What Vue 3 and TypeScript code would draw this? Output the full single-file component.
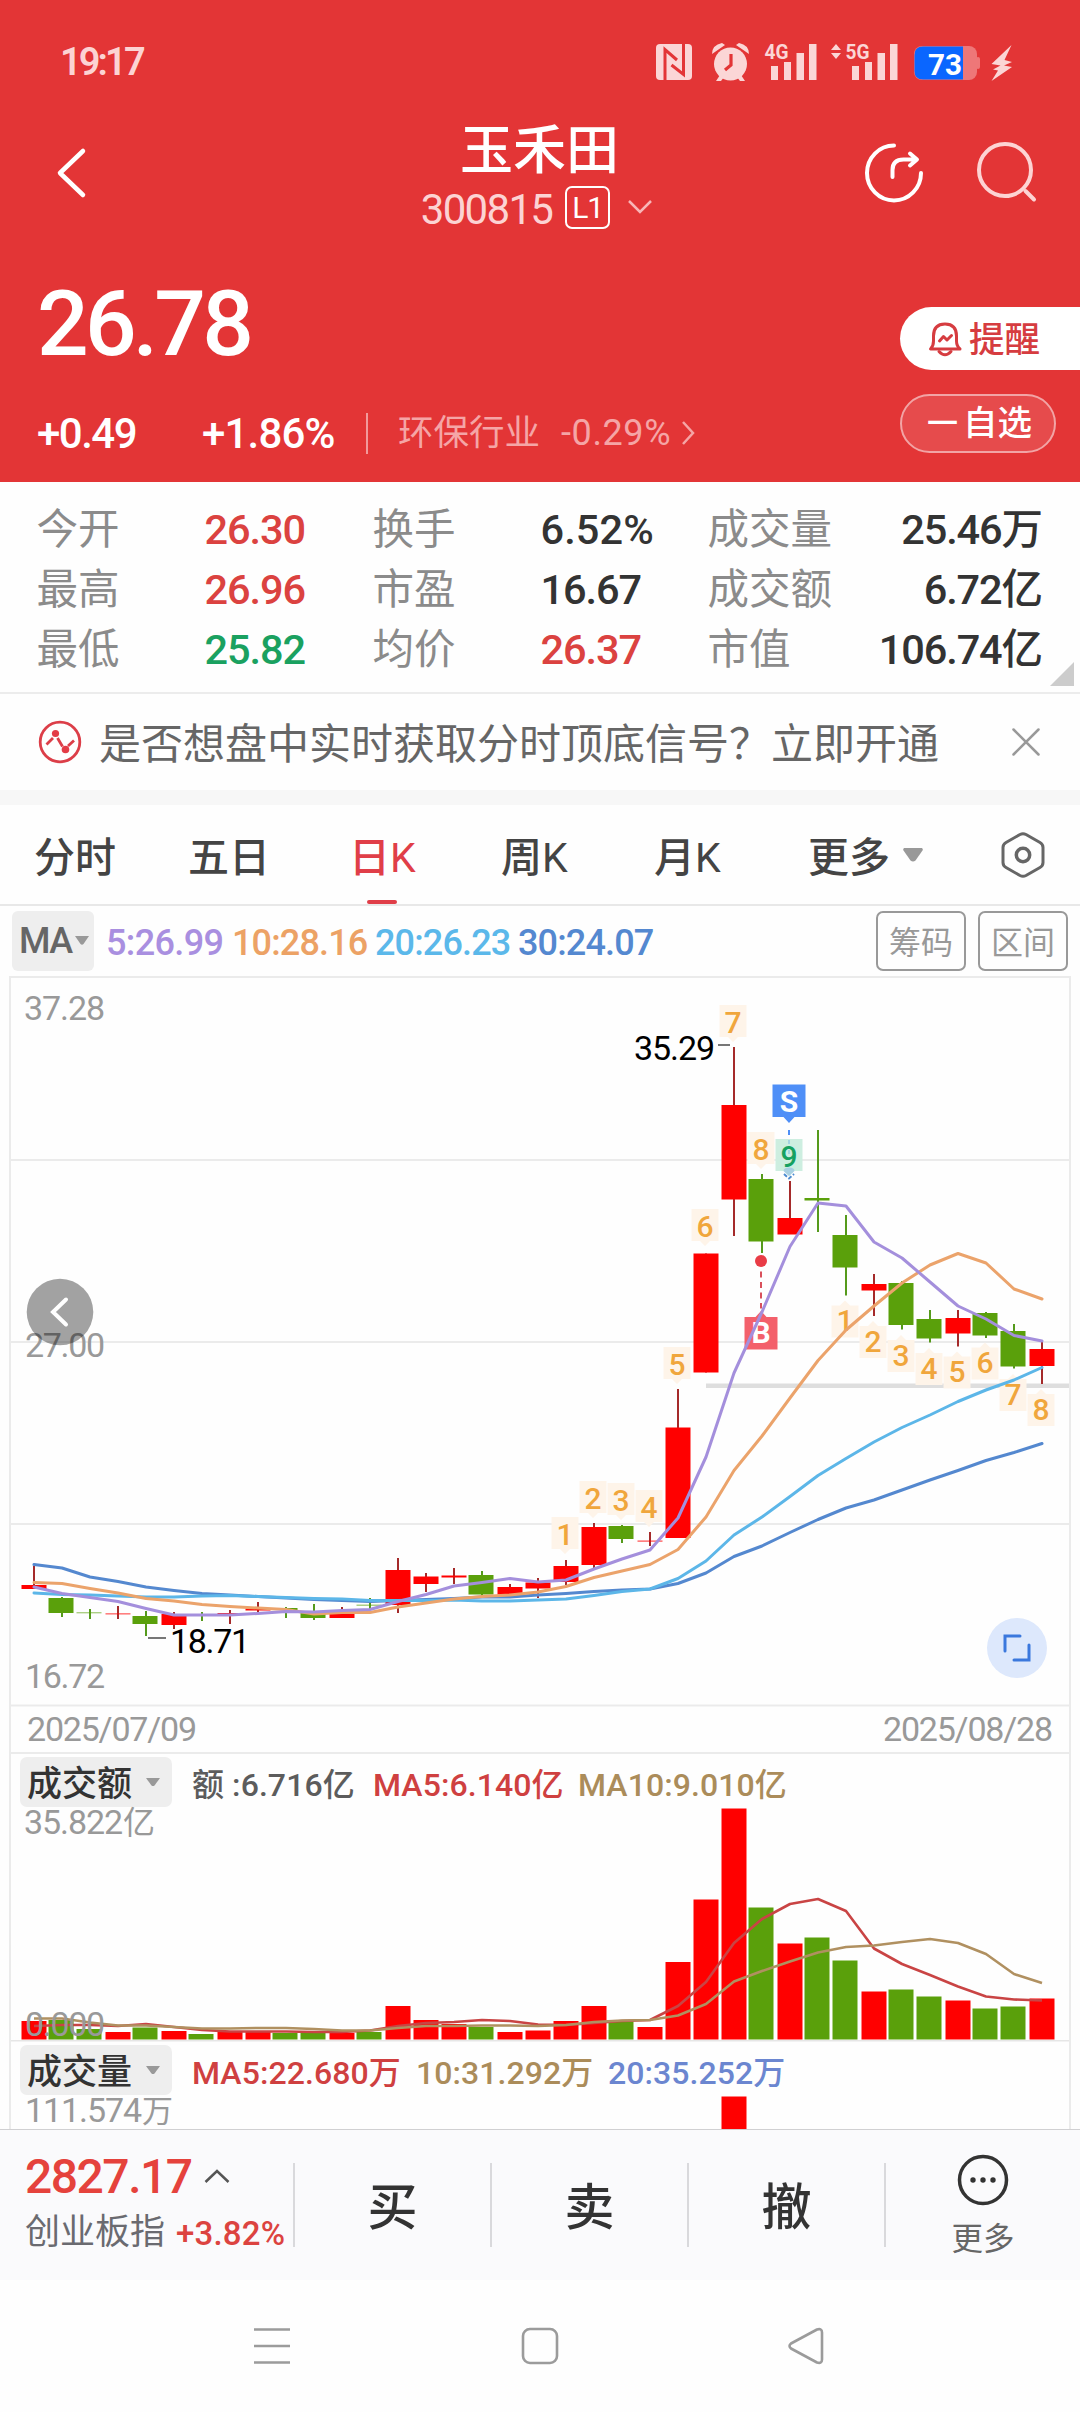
<script setup lang="ts">
interface Candle { up: boolean; top: number; bottom: number; high: number; low: number }
interface Badge { text: string; x: number; y: number; below?: boolean; green?: boolean }

const cx = (i: number): number => 34 + 28 * i

// [direction, body top, body bottom, high, low]
const rawCandles: [number, number, number, number, number][] = [
  [1, 1585, 1589, 1566, 1587], [0, 1598, 1613, 1597, 1617], [0, 1612, 1613.4, 1609, 1619],
  [1, 1613, 1614.6, 1606, 1619], [0, 1616, 1624, 1611, 1636], [1, 1614, 1625, 1612, 1629],
  [0, 1614, 1615.6, 1612, 1621], [1, 1613, 1615, 1610, 1624], [1, 1608.5, 1610.5, 1602, 1613],
  [0, 1608, 1610, 1607, 1618], [0, 1613, 1618, 1604, 1620], [1, 1613.5, 1618, 1607, 1618],
  [0, 1604.5, 1606, 1598, 1609], [1, 1570, 1605, 1558, 1613], [1, 1576.5, 1584, 1573, 1592],
  [1, 1575.5, 1577.5, 1568, 1584], [0, 1575, 1594.5, 1571, 1597], [1, 1587, 1594.5, 1584, 1596],
  [1, 1582.5, 1588.5, 1578, 1598], [1, 1566, 1582, 1560, 1585], [1, 1527, 1565, 1523, 1569],
  [0, 1526, 1539, 1525, 1543], [1, 1540.3, 1542, 1532, 1546], [1, 1427.5, 1538, 1389, 1538],
  [1, 1253.5, 1372.5, 1253.5, 1372.5], [1, 1105, 1199.5, 1047, 1236], [0, 1179, 1241.5, 1174, 1253],
  [1, 1218, 1234.5, 1181, 1234], [0, 1198, 1200.5, 1130, 1232], [0, 1235, 1267.5, 1215, 1295.5],
  [1, 1284, 1290.5, 1274, 1316], [0, 1283, 1325, 1281, 1329.5], [0, 1319, 1338.5, 1310, 1342.5],
  [1, 1318, 1333.5, 1310, 1346.5], [0, 1313, 1335.5, 1312, 1338], [0, 1331, 1366.5, 1324, 1368.5],
  [1, 1349, 1366, 1342, 1384],
]
const candles: Candle[] = rawCandles.map(([d, top, bottom, high, low]) => ({ up: d === 1, top, bottom, high, low }))

const line = (ys: number[]): string => ys.map((y, i) => `${cx(i)},${y}`).join(' ')

const averages: { color: string; points: string }[] = [
  { color: '#5488cf', points: line([1564.5, 1568, 1577, 1581.5, 1587, 1590.5, 1593.5, 1595, 1596.5, 1598, 1599.5, 1600.5, 1601.5, 1600.5, 1599.5, 1598.5, 1597, 1597, 1595, 1593.5, 1591.5, 1590, 1589, 1583.5, 1573, 1556.5, 1546, 1532.5, 1519.5, 1508, 1500, 1490, 1480, 1470.5, 1460.5, 1452.5, 1443.5]) },
  { color: '#5cb6e8', points: line([1593, 1594.5, 1595, 1596, 1597, 1597, 1596, 1595.5, 1596.5, 1597.5, 1598.5, 1599, 1600.5, 1600.5, 1600.5, 1600, 1601, 1601, 1600, 1599, 1595.5, 1591.5, 1589, 1578.5, 1561, 1535, 1517, 1496.5, 1475.5, 1458.5, 1442, 1427.5, 1415, 1401.5, 1390, 1380, 1367.5]) },
  { color: '#eba36b', points: line([1582.5, 1583.5, 1588.5, 1593, 1598.5, 1601, 1604.5, 1606.5, 1608, 1609.5, 1614, 1612.5, 1612.5, 1607, 1603, 1599, 1596.5, 1595, 1592, 1586.5, 1577.5, 1571, 1564.5, 1549.5, 1517, 1470.5, 1436, 1398, 1360.5, 1330, 1306, 1283, 1265, 1253.5, 1263, 1289, 1299]) },
  { color: '#a48fdc', points: line([1587, 1593.5, 1597.5, 1601.5, 1608.5, 1615, 1615, 1615, 1613.5, 1611.5, 1612, 1610.5, 1609.5, 1601.5, 1594.5, 1586, 1582.5, 1578.5, 1582, 1580, 1569, 1559, 1550, 1518, 1457, 1373, 1312, 1246.5, 1203, 1206, 1242, 1258, 1282, 1306, 1319, 1335.5, 1341]) },
]

const amountTops: number[] = [2021, 2020, 2029, 2032, 2027.5, 2031, 2034, 2032, 2032, 2033, 2033, 2033, 2032, 2006, 2020, 2024, 2027, 2032, 2030.5, 2021, 2006, 2021, 2027, 1962, 1899.5, 1808.5, 1907.5, 1943.5, 1937.5, 1960.5, 1991.5, 1989.5, 1996.5, 2000.5, 2008.5, 2006.5, 1998.5]
const amountMa5 = line([2026, 2025, 2025, 2026, 2024, 2027, 2030, 2031.5, 2031.5, 2031.5, 2032, 2032, 2030.5, 2026, 2023, 2022, 2020, 2021, 2024.5, 2025, 2023, 2021, 2020, 2006, 1982, 1943, 1919, 1904, 1899, 1911, 1948.5, 1964, 1975, 1986.5, 1996.5, 1999.5, 2000.5])
const amountMa10 = line([2018.5, 2018.5, 2022.5, 2025.5, 2025.5, 2027, 2028.5, 2028.5, 2028, 2028, 2029, 2030.5, 2030.5, 2028, 2026, 2026, 2025.5, 2025.5, 2026, 2025, 2022, 2020.5, 2020, 2015.5, 2004, 1981.5, 1971, 1961.5, 1952.5, 1947, 1945.5, 1942, 1939, 1943, 1954, 1974, 1983])

const badges: Badge[] = [
  { text: '1', x: 565, y: 1517 }, { text: '2', x: 593, y: 1481 }, { text: '3', x: 621, y: 1483 },
  { text: '4', x: 649, y: 1490 }, { text: '5', x: 677, y: 1347 }, { text: '6', x: 705, y: 1209 },
  { text: '7', x: 733, y: 1005 }, { text: '8', x: 761, y: 1132 }, { text: '9', x: 789, y: 1139, green: true },
  { text: '1', x: 845, y: 1305.5, below: true }, { text: '2', x: 873, y: 1326, below: true },
  { text: '3', x: 901, y: 1340, below: true }, { text: '4', x: 929, y: 1353, below: true },
  { text: '5', x: 957, y: 1356.5, below: true }, { text: '6', x: 985, y: 1347.5, below: true },
  { text: '7', x: 1013, y: 1379, below: true }, { text: '8', x: 1041, y: 1394, below: true },
]
const badgePath = (b: Badge): string => b.below
  ? `M${b.x - 13.5} ${b.y}h8.500l5-5l5 5h8.500v32h-27z`
  : `M${b.x - 13.5} ${b.y}h27v32h-8.500l-5 5l-5-5h-8.500z`

const stats: { label: string; value: string; tone?: string }[][] = [
  [{ label: '今开', value: '26.30', tone: 'red' }, { label: '换手', value: '6.52%' }, { label: '成交量', value: '25.46万' }],
  [{ label: '最高', value: '26.96', tone: 'red' }, { label: '市盈', value: '16.67' }, { label: '成交额', value: '6.72亿' }],
  [{ label: '最低', value: '25.82', tone: 'green' }, { label: '均价', value: '26.37', tone: 'red' }, { label: '市值', value: '106.74亿' }],
]
const tabs: { name: string; width: number; active?: boolean }[] = [
  { name: '分时', width: 154 }, { name: '五日', width: 154 }, { name: '日K', width: 159, active: true },
  { name: '周K', width: 153 }, { name: '月K', width: 154 },
]
</script>

<template>
  <main class="screen">
    <header class="hero">
      <div class="status">
        <span class="clock">19:17</span>
        <svg class="status-icons" width="364" height="44" viewBox="652 40 364 44">
          <rect x="656" y="44" width="36" height="36" rx="4" />
          <g fill="none" stroke="#e33536" stroke-width="3">
            <path d="M665 80V49.500L677 60M683.500 44V74.500L671.500 65" />
          </g>
          <circle cx="730.500" cy="64" r="16.500" />
          <path d="M712 54q0-9 10-11l3 2zM749 54q0-9-10-11l-3 2zM720 75l-4 6h5l3-4zM741 75l4 6h-5l-3-4z" />
          <path d="M731 54v11l-6 5" fill="none" stroke="#e33536" stroke-width="3.200" />
          <text x="764.500" y="59" font-size="21" textLength="24" lengthAdjust="spacingAndGlyphs">4G</text>
          <path d="M771 66h7v14h-7zM784 62h7v18h-7zM796.500 53h7.500v27h-7.500zM809 44h7.500v36H809z" />
          <path d="M831 50l5-6l5 6zM831 53l5 6l5-6z" />
          <text x="845.500" y="59" font-size="21" textLength="24" lengthAdjust="spacingAndGlyphs">5G</text>
          <path d="M852 66h7v14h-7zM865 62h7v18h-7zM877.500 53h7.500v27h-7.500zM890 44h7.500v36H890z" />
          <rect x="914" y="46" width="63" height="34" rx="8" fill="#ee7778" />
          <rect x="976" y="57" width="4" height="12" rx="2" fill="#ee7778" />
          <path d="M963 46.500v33h-40q-8.500 0-8.500-8.500V55q0-8.500 8.500-8.500z" fill="#0a66ff" />
          <text x="928" y="74.500" font-size="30" fill="#fff" textLength="34" lengthAdjust="spacingAndGlyphs">73</text>
          <path d="M1011.500 45L991.500 64l9 1.500L993 69.500l5 1L991.500 81l20.500-14-8-1.500 8-3.500-7.500-2z" />
        </svg>
      </div>

      <div class="nav">
        <svg class="back" width="40" height="60" viewBox="50 143 40 60" fill="none" stroke="#fff" stroke-width="4.500" stroke-linecap="round" stroke-linejoin="round">
          <path d="M83 151L60 173L83 195" />
        </svg>
        <div class="title">
          <h1>玉禾田</h1>
          <div class="code">
            <span class="code-num">300815</span>
            <span class="level">L1</span>
            <svg width="28" height="18" viewBox="0 0 28 18" fill="none" stroke="#f8b6b7" stroke-width="2.500"><path d="M3 3l11 11L25 3" /></svg>
          </div>
        </div>
        <svg class="tools" width="190" height="70" viewBox="860 138 190 70" fill="none" stroke="#fff" stroke-width="4" stroke-linecap="round">
          <path d="M894 145.500A27 27.500 0 1 0 921 173" />
          <path d="M892.500 177V170q0-10.500 11-10.500H916M910 153.500l7 6l-7 6" stroke-linejoin="round" />
          <g stroke="#fdd3d3"><circle cx="1005" cy="170" r="26" /><path d="M1025.500 191L1034 199.500" /></g>
        </svg>
      </div>

      <div class="quote">
        <div class="quote-main">
          <div class="price">26.78</div>
          <div class="changes">
            <span class="chg">+0.49</span>
            <span class="pct">+1.86%</span>
            <i class="bar"></i>
            <span class="industry">环保行业</span>
            <span class="ind-pct">-0.29%</span>
            <svg width="16" height="28" viewBox="0 0 16 28" fill="none" stroke="#f5a5a6" stroke-width="2.500"><path d="M3 3l10 11L3 25" /></svg>
          </div>
        </div>
        <div class="actions">
          <div class="remind">
            <svg width="34" height="38" viewBox="928 320 34 38" fill="none" stroke="#d63c40" stroke-width="3" stroke-linecap="round" stroke-linejoin="round">
              <path d="M930.500 349H960Q956.500 346 956.500 341V336Q956.500 324 945 324T933.500 336V341Q933.500 346 930.500 349z" />
              <path d="M939 351.500Q945 358 951 351.500M939.500 341l4-4.500 3.500 3.500 4.500-4.500" />
            </svg>
            <span>提醒</span>
          </div>
          <div class="watch"><span class="dash">一</span><span>自选</span></div>
        </div>
      </div>
    </header>

    <section class="stats">
      <div v-for="(row, r) in stats" :key="r" class="stat-row">
        <template v-for="s in row" :key="s.label">
          <span class="label">{{ s.label }}</span><span class="value" :class="[s.tone, { percent: s.value.endsWith('%') }]">{{ s.value }}</span>
        </template>
      </div>
      <i class="corner"></i>
    </section>

    <section class="banner">
      <svg width="44" height="44" viewBox="38 720 44 44" fill="none" stroke="#dc3e48" stroke-width="2.800">
        <circle cx="60" cy="742" r="19.800" />
        <path d="M46.500 744.500L53 738M57.500 738L62.500 746.500M68 746l6-5.500" />
        <circle cx="55.500" cy="733.500" r="3.600" fill="#e33c46" stroke="none" />
        <circle cx="65.500" cy="749.500" r="3.800" fill="#e33c46" stroke="none" />
      </svg>
      <span class="banner-text">是否想盘中实时获取分时顶底信号？立即开通</span>
      <svg class="close" width="30" height="30" viewBox="0 0 30 30" fill="none" stroke="#999" stroke-width="2.500" stroke-linecap="round"><path d="M2.500 2.500l25 25M27.500 2.500l-25 25" /></svg>
    </section>

    <nav class="tabs">
      <span v-for="t in tabs" :key="t.name" class="tab" :class="{ active: t.active }" :style="{ width: t.width + 'px' }"><b>{{ t.name }}</b></span>
      <span class="tab more"><b>更多</b></span>
      <svg width="22" height="16" viewBox="0 0 22 16"><path d="M2 1h18q1.500 1 .5 2.500l-7 10q-2.500 2-5 0l-7-10Q.5 2 2 1z" fill="#999" /></svg>
      <svg class="hex" width="48" height="52" viewBox="999 829 48 52" fill="none" stroke="#666" stroke-width="3" stroke-linejoin="round">
        <path d="M1020 834.500q3-1.500 6 0l14 8q3 1.700 3 5v15q0 3.300-3 5l-14 8q-3 1.500-6 0l-14-8q-3-1.700-3-5v-15q0-3.300 3-5z" />
        <circle cx="1023" cy="855" r="6.700" stroke-width="3.500" />
      </svg>
    </nav>

    <section class="indicators">
      <span class="ma-box">MA<svg width="14" height="10" viewBox="0 0 14 10"><path d="M0 0h14L8.500 8q-1.500 1.500-3 0z" fill="#999" /></svg></span>
      <span class="ma m5">5:26.99</span>
      <span class="ma m10">10:28.16</span>
      <span class="ma m20">20:26.23</span>
      <span class="ma m30">30:24.07</span>
      <span class="chip">筹码</span>
      <span class="chip">区间</span>
    </section>

    <section class="chart">
      <svg class="kline" width="1058" height="776" viewBox="11 978 1058 776">
        <g fill="#ebebeb">
          <rect v-for="y in [1159, 1341, 1523, 1704.500, 1752]" :key="y" x="11" :y="y" width="1058" height="2" />
        </g>
        <rect x="706" y="1383.500" width="364" height="4.500" fill="#dedede" />
        <g class="axis">
          <text x="24" y="1019.500" textLength="81">37.28</text>
          <text x="25" y="1356.500" textLength="80">27.00</text>
          <text x="25" y="1687.500" textLength="80">16.72</text>
          <text x="27" y="1741" textLength="170">2025/07/09</text>
          <text x="883" y="1741" textLength="170">2025/08/28</text>
        </g>
        <g v-for="(b, i) in badges" :key="'p' + i">
          <path :d="badgePath(b)" :fill="b.green ? '#cdeee0' : '#fef4e9'" />
          <text class="badge" :x="b.x" :y="b.y + (b.below ? 25.500 : 28)" :fill="b.green ? '#17a160' : '#f0a63c'">{{ b.text }}</text>
        </g>
        <g v-for="(c, i) in candles" :key="i">
          <rect :x="cx(i) - 1" :y="c.high" width="2" :height="c.low - c.high" :fill="c.up ? '#a52a2a' : '#559a1c'" />
          <rect :x="cx(i) - (c.up ? 12.500 : 13.500)" :y="c.top" width="25" :height="c.bottom - c.top" :fill="c.up ? '#ff0000' : '#5aa00b'" :opacity="c.bottom - c.top < 2 ? 0.5 : 1" />
        </g>
        <g class="trade">
          <path d="M744.500 1317h11l5.500-6l5.500 6h11v32.500h-33z" fill="#f3606b" />
          <text x="761" y="1343">B</text>
          <path d="M761 1271.500v37" stroke="#d9505b" stroke-width="2" stroke-dasharray="6 4.500" />
          <circle cx="761" cy="1261" r="6" fill="#e93c46" />
          <path d="M772.500 1084.500h33v32.500h-11l-5.500 6l-5.500-6h-11z" fill="#4f8ff7" />
          <text x="789" y="1112">S</text>
          <path d="M789 1130v5" stroke="#4f8ff7" stroke-width="2" />
          <path d="M789 1140v4M789 1150v4" stroke="#a4d3e2" stroke-width="2" />
          <path d="M783.500 1171q0-3.500 5.500-3.500t5.500 3.500l-5.500 5z" fill="#a9d0e2" />
          <path d="M784 1174l5 4.500l5-4.500" fill="none" stroke="#4d8bd0" stroke-width="2" stroke-dasharray="4 2" />
        </g>
        <g fill="none" stroke-width="3" stroke-linecap="round" stroke-linejoin="round">
          <polyline v-for="m in averages" :key="m.color" :points="m.points" :stroke="m.color" />
        </g>
        <path d="M148 1638h18M718 1045h12" stroke="#777" stroke-width="2" />
        <text class="mark" x="170" y="1652.500" textLength="80">18.71</text>
        <text class="mark" x="634" y="1059.500" textLength="81">35.29</text>
        <circle cx="60" cy="1312" r="33.300" fill="rgba(0,0,0,.36)" />
        <path d="M66 1299.500L53 1312L66 1324.500" fill="none" stroke="#fff" stroke-width="4" stroke-linecap="round" />
        <circle cx="1017" cy="1648" r="30" fill="#dde8fc" />
        <path d="M1020 1636h-15v15M1029 1645v15h-15" fill="none" stroke="#3b78dd" stroke-width="3" stroke-linecap="round" />
      </svg>

      <div class="pane-head">
        <span class="picker"><b>成交额</b><svg width="14" height="9" viewBox="0 0 14 9"><path d="M0 0h14L8.500 7.500q-1.500 1.200-3 0z" fill="#999" /></svg></span>
        <span class="p1 gray">额 :6.716亿</span>
        <span class="p2 red">MA5:6.140亿</span>
        <span class="p3 tan">MA10:9.010亿</span>
      </div>
      <svg class="amount" width="1058" height="233" viewBox="11 1808 1058 233">
        <rect v-for="(t, i) in amountTops" :key="i" :x="cx(i) - (candles[i].up ? 12.500 : 13.500)" :y="t" width="25" :height="2039.500 - t" :fill="candles[i].up ? '#ff0000' : '#5aa00b'" />
        <g fill="none" stroke-width="2.600" stroke-linejoin="round">
          <polyline :points="amountMa5" stroke="#c94444" />
          <polyline :points="amountMa10" stroke="#b09060" />
        </g>
        <g class="axis">
          <text x="24" y="1834" textLength="99">35.822</text>
          <text x="123" y="1834" font-size="32">亿</text>
          <text x="25" y="2035.500" textLength="80">0.000</text>
        </g>
        <rect x="11" y="2040" width="1058" height="1.500" fill="#e6e6e6" />
      </svg>

      <div class="pane-head volume">
        <span class="picker"><b>成交量</b><svg width="14" height="9" viewBox="0 0 14 9"><path d="M0 0h14L8.500 7.500q-1.500 1.200-3 0z" fill="#999" /></svg></span>
        <span class="p1 red">MA5:22.680万</span>
        <span class="p2 tan">10:31.292万</span>
        <span class="p3 blue">20:35.252万</span>
      </div>
      <svg class="vol" width="1058" height="34" viewBox="11 2096 1058 34">
        <rect x="721.500" y="2096.500" width="25" height="34" fill="#ff0000" />
        <g class="axis">
          <text x="25" y="2121.500" textLength="117">111.574</text>
          <text x="142" y="2121.500" font-size="31">万</text>
        </g>
      </svg>
    </section>

    <footer class="trade-bar">
      <div class="index">
        <div class="index-top"><span class="index-num">2827.17</span><svg width="26" height="16" viewBox="0 0 26 16" fill="none" stroke="#555" stroke-width="2.500"><path d="M1.500 14L13 3L24.500 14" /></svg></div>
        <div class="index-bottom"><span>创业板指</span><em>+3.82%</em></div>
      </div>
      <div class="deal">买</div>
      <div class="deal">卖</div>
      <div class="deal wide">撤</div>
      <div class="more-btn">
        <svg width="52" height="52" viewBox="0 0 52 52" fill="none" stroke="#333" stroke-width="3.500">
          <circle cx="26" cy="26" r="23.500" />
          <g fill="#333" stroke="none"><circle cx="16" cy="26" r="2.700" /><circle cx="26" cy="26" r="2.700" /><circle cx="36" cy="26" r="2.700" /></g>
        </svg>
        <span>更多</span>
      </div>
    </footer>

    <div class="system">
      <svg width="1080" height="132" viewBox="0 2280 1080 132" fill="none" stroke="#9b9b9b" stroke-width="2.600" stroke-linejoin="round">
        <path d="M254 2329.500h36M254 2346h36M254 2362.500h36" />
        <rect x="523" y="2329" width="34" height="34" rx="7" />
        <path d="M791 2343.500l26-14q5-1.500 5 3v27q0 4.500-5 3l-26-14q-3-2.500 0-5z" />
      </svg>
    </div>
  </main>
</template>

<style>
body { background: #fefefe; }
</style>

<style scoped>
.screen { width: 1080px; height: 2412px; overflow: hidden; background: #fefefe; font-family: Roboto, "Noto Sans CJK SC", sans-serif; }
.screen svg { display: block; flex: none; overflow: visible; }
span, div { white-space: nowrap; }

.hero { height: 482px; background: #e33536; color: #fff; display: flex; flex-direction: column; }
.status { height: 84px; padding: 40px 64px 0 60px; box-sizing: border-box; display: flex; justify-content: space-between; color: #fcd3d3; }
.clock { font-size: 38px; line-height: 44px; font-weight: 600; letter-spacing: -2.9px; }
.status-icons { fill: #fbd6d6; font-weight: 700; }
.nav { height: 150px; display: flex; align-items: flex-start; padding-left: 50px; }
.back { margin-top: 59px; }
.title { width: 770px; display: flex; flex-direction: column; align-items: center; margin-top: 34px; }
h1 { margin: 0 0 0 129px; font-size: 53px; line-height: 66px; font-weight: 500; }
.code { display: flex; align-items: center; height: 46px; margin: 0 0 0 125px; }
.code-num { font-size: 42px; letter-spacing: -1.7px; color: #fcd3d3; line-height: 46px; padding-top: 5px; }
.level { box-sizing: border-box; width: 45px; height: 43px; border: 2px solid #fff; border-radius: 7px; font-size: 30px; line-height: 39px; text-align: center; margin: 0 16px 0 13px; letter-spacing: -1px; }
.tools { margin-top: 54px; }

.quote { display: flex; justify-content: space-between; height: 248px; }
.quote-main { padding-left: 37px; display: flex; flex-direction: column; }
.price { margin-top: 38px; height: 102px; font-size: 91px; line-height: 104px; font-weight: 500; letter-spacing: -3.8px; }
.changes { display: flex; align-items: center; margin-top: 32px; height: 54px; font-size: 42px; font-weight: 500; letter-spacing: -1.500px; }
.chg { width: 165px; }
.pct { width: 164px; letter-spacing: -0.8px; }
.bar { width: 2px; height: 41px; background: #f29a9b; margin-right: 30px; }
.industry { font-size: 35.5px; line-height: 50px; font-weight: 400; color: #f5a5a6; width: 163px; letter-spacing: 0; padding-bottom: 1px; }
.ind-pct { font-size: 36px; font-weight: 400; color: #f5a5a6; width: 119px; letter-spacing: 0.6px; }
.actions { width: 180px; padding-top: 73px; }
.remind { height: 63px; background: #fff; border-radius: 32px 0 0 32px; display: flex; align-items: center; padding-left: 28px; color: #d63c40; font-size: 35.5px; font-weight: 500; }
.remind span { margin-left: 7px; line-height: 60px; padding-top: 3px; }
.watch { box-sizing: border-box; margin-top: 24px; width: 156px; height: 59px; border: 2px solid #f2a4a5; border-radius: 30px; background: #e64b4c; display: flex; align-items: center; padding-left: 25px; font-size: 34.500px; font-weight: 500; line-height: 57px; }
.dash { font-size: 31px; font-weight: 500; margin-right: 5px; }

.stats { position: relative; height: 212px; box-sizing: border-box; border-bottom: 2px solid #ececec; padding: 16.5px 38px 0 36.5px; }
.stat-row { height: 60px; line-height: 61px; display: grid; grid-template-columns: 168px 168px 168px 167px 167px 1fr; font-size: 41.5px; color: #333; }
.label { color: #8b8b8b; }
.value { font-weight: 470; letter-spacing: -1.1px; }
.value.percent { letter-spacing: 0.1px; }
.value:last-child { text-align: right; }
.value.red { color: #db4240; }
.value.green { color: #1aa160; }
.corner { position: absolute; right: 6px; bottom: 6px; border-left: 24px solid transparent; border-bottom: 24px solid #ccc; }

.banner { height: 96px; display: flex; align-items: center; padding-left: 38px; border-bottom: 15px solid #f7f7f7; }
.banner-text { margin-left: 17px; font-size: 42px; line-height: 90px; padding-top: 6px; color: #666; }
.close { margin-left: 72px; }

.tabs { height: 101px; box-sizing: border-box; border-bottom: 2px solid #e8e8e8; display: flex; align-items: center; padding-left: 34px; color: #444; font-size: 41px; }
.tab { height: 99px; line-height: 106px; position: relative; box-sizing: border-box; flex: none; }
.tab b { font-weight: 450; }
.tab.active { color: #e03e48; padding-left: 7px; }
.tab.active::after { content: ""; position: absolute; left: 25px; bottom: 0; width: 30px; height: 4px; border-radius: 2px; background: #e03e48; }
.tab.more { width: 94px; }
.hex { margin-left: 75px; }

.indicators { height: 70px; display: flex; align-items: center; padding-left: 12px; font-size: 36px; }
.ma-box { box-sizing: border-box; width: 82px; height: 60px; line-height: 64px; padding-left: 7px; border-radius: 6px; background: #eee; color: #666; display: flex; align-items: center; gap: 3px; margin-right: 12px; font-size: 36px; font-weight: 470; letter-spacing: -1.5px; }
.ma { font-weight: 480; letter-spacing: -0.85px; line-height: 64px; padding-top: 3px; width: 143px; }
.m5 { color: #a98fe0; width: 126px; letter-spacing: -0.65px; }
.m10 { color: #eca265; }
.m20 { color: #5bb8ea; }
.m30 { color: #5488d0; flex: 1; }
.chip { box-sizing: border-box; width: 90px; height: 60px; border: 2px solid #999; border-radius: 7px; color: #999; font-size: 32px; line-height: 61px; text-align: center; margin-right: 12px; }

.chart { margin: 0 9px; border: 2px solid #ebebeb; border-bottom: 0; height: 1152px; overflow: hidden; }
.axis { fill: #999; font-size: 34px; }
.badge { font-size: 30px; font-weight: 500; text-anchor: middle; }
.trade text { font-size: 30px; font-weight: 700; fill: #fff; text-anchor: middle; }
.mark { font-size: 34px; fill: #000; }
.pane-head { height: 54px; display: flex; align-items: center; padding: 2px 0 0 9px; font-size: 32px; font-weight: 480; letter-spacing: 0.08px; box-sizing: border-box; }
.pane-head.volume { height: 55px; padding-top: 3px; }
.picker { box-sizing: border-box; width: 152px; height: 50px; border-radius: 7px; background: #eee; color: #333; font-size: 35px; letter-spacing: 0; padding-left: 7px; display: flex; align-items: center; gap: 14px; margin-right: 20px; }
.picker b { font-weight: 450; line-height: 46px; padding-top: 5px; }
.p1 { width: 181px; }
.p2 { width: 205px; }
.volume .p1 { width: 224px; }
.volume .p2 { width: 192px; }
.gray { color: #5c5c5c; }
.red { color: #cf4040; }
.tan { color: #ab8c5a; }
.blue { color: #6b86d0; }

.trade-bar { height: 151px; margin-top: -1px; position: relative; box-sizing: border-box; border-top: 1px solid #d0d0d2; background: #fafafc; display: flex; align-items: center; }
.index { width: 293px; padding-left: 25px; box-sizing: border-box; height: 150px; }
.index-top { display: flex; align-items: center; height: 54px; margin-top: 19px; color: #e5423c; font-size: 48px; font-weight: 500; }
.index-num { width: 179px; letter-spacing: -1.5px; }
.index-bottom { display: flex; align-items: center; height: 50px; margin-top: 6px; font-size: 35px; line-height: 50px; color: #6a6a70; }
.index-bottom span { padding-bottom: 2px; }
.index-bottom em { font-style: normal; font-weight: 470; font-size: 33px; color: #dc4340; margin-left: 11px; letter-spacing: 0.2px; }
.deal { width: 197px; height: 84px; line-height: 90px; box-sizing: border-box; border-left: 2px solid #d9d9dc; text-align: center; font-size: 50px; font-weight: 500; color: #333; }
.deal.wide { width: 199px; border-right: 2px solid #d9d9dc; }
.more-btn { flex: 1; display: flex; flex-direction: column; align-items: center; font-size: 31.5px; line-height: 40px; color: #666; padding-top: 3px; }
.more-btn span { margin-top: 14px; }
.system { height: 132px; }
</style>
